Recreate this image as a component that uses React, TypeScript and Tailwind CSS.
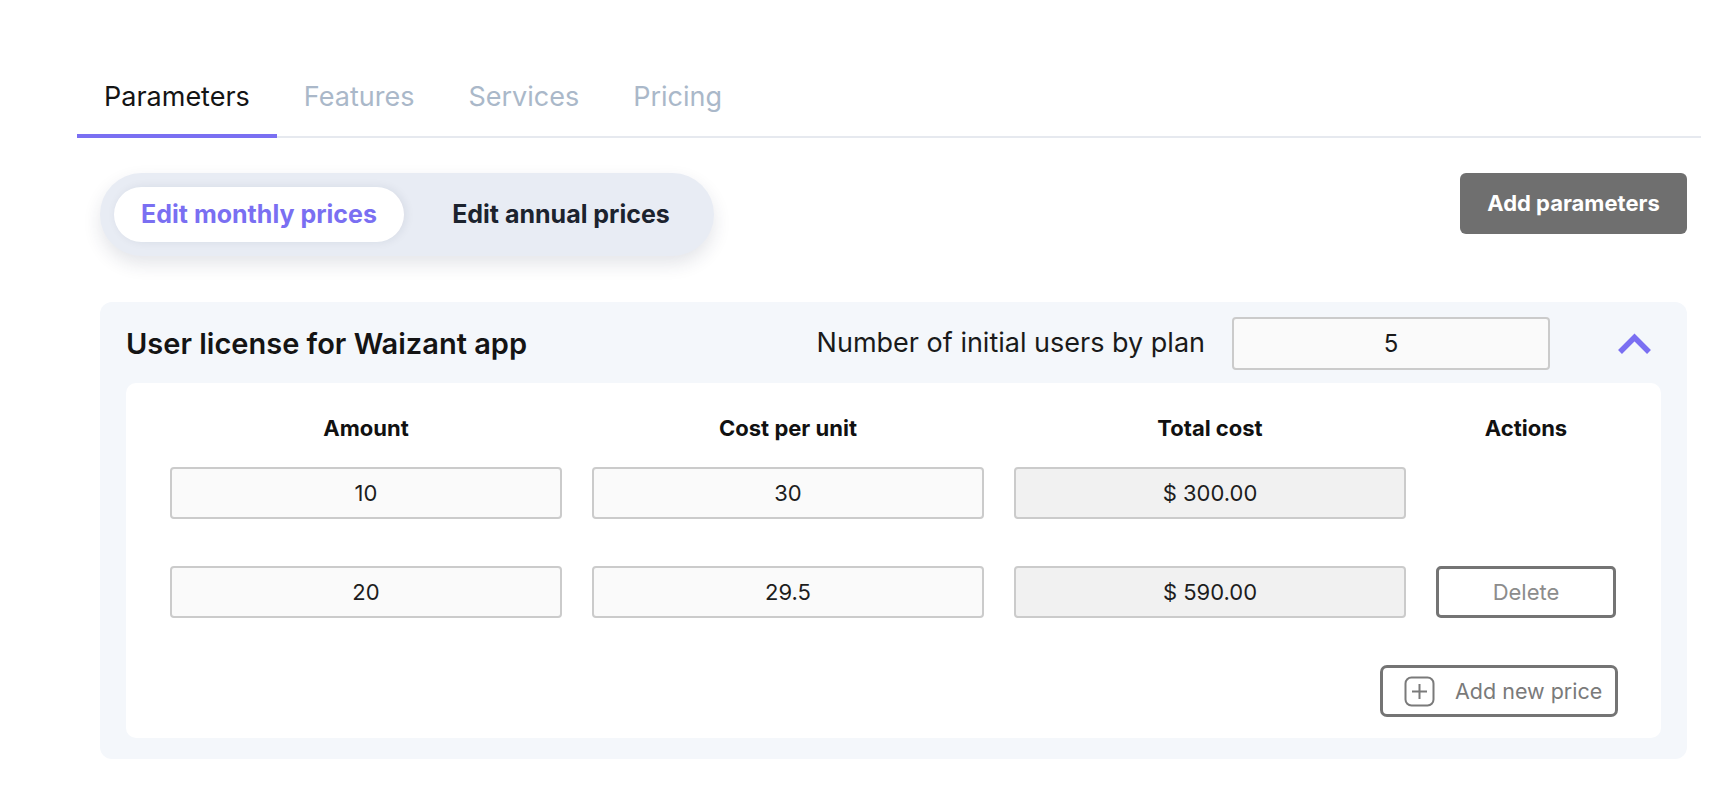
const tabs = ["Parameters", "Features", "Services", "Pricing"];

const rows = [
  { amount: "10", cost: "30", total: "$ 300.00", removable: false },
  { amount: "20", cost: "29.5", total: "$ 590.00", removable: true },
];

function Field({ value, readOnly }: { value: string; readOnly?: boolean }) {
  return (
    <div
      className={
        "flex h-[52px] items-center justify-center rounded-[4px] border-2 border-[#cbcbcb] text-[22px] text-[#1d1d1d] " +
        (readOnly ? "bg-[#f1f1f1]" : "bg-[#fafafa]")
      }
    >
      {value}
    </div>
  );
}

export default function App() {
  return (
    <div className="h-[798px] w-full overflow-hidden bg-white font-['Inter',sans-serif]">
      {/* Tabs */}
      <div className="pt-[82px]">
        <div className="ml-[77px] flex w-[1624px] border-b-2 border-[#e6e9ef]">
          {tabs.map((tab, i) => (
            <button
              key={tab}
              type="button"
              className={
                "-mb-[2px] border-b-4 px-[27px] pb-[22px] text-[27px] leading-[30px] " +
                (i === 0 ? "border-[#7a6ff2] text-[#141414]" : "border-transparent text-[#aab8c9]")
              }
            >
              {tab}
            </button>
          ))}
        </div>
      </div>

      <div className="ml-[100px] w-[1587px]">
        {/* Toggle + add */}
        <div className="mt-[35px] flex items-start justify-between">
          <div className="flex h-[83px] w-[614px] items-center rounded-full bg-[#e8ecf4] p-[14px] shadow-[0_8px_18px_rgba(30,40,70,0.12)]">
            <button
              type="button"
              className="h-[55px] w-[290px] rounded-full bg-white text-[25px] font-bold text-[#7a6ff2] shadow-[2px_0_10px_rgba(30,40,70,0.08)]"
            >
              Edit monthly prices
            </button>
            <button type="button" className="h-[55px] flex-1 pl-[18px] text-[25px] font-bold text-[#1c232e]">
              Edit annual prices
            </button>
          </div>
          <button
            type="button"
            className="h-[61px] w-[227px] rounded-[6px] bg-[#6f6f6f] text-[22px] font-bold text-white"
          >
            Add parameters
          </button>
        </div>

        {/* Parameter panel */}
        <div className="mt-[46px] rounded-[12px] bg-[#f4f7fb] px-[26px] pb-[21px] pt-[15px]">
          <div className="flex h-[53px] items-center">
            <h2 className="flex-1 text-[29px] font-semibold text-[#141414]">User license for Waizant app</h2>
            <span className="text-[27px] text-[#1a1a1a]">Number of initial users by plan</span>
            <div className="ml-[27px] flex h-[53px] w-[318px] items-center justify-center rounded-[4px] border-2 border-[#cbcbcb] bg-[#fafafa] text-[24px] text-[#1a1a1a]">
              5
            </div>
            <button type="button" className="ml-[67px] mr-[9px] flex h-[53px] w-[35px] items-center justify-center">
              <svg width="35" height="22" viewBox="0 0 35 22" fill="none">
                <path d="M3 19 L17.5 4.5 L32 19" stroke="#7a6ff2" strokeWidth="5.5" strokeLinejoin="miter" />
              </svg>
            </button>
          </div>

          <div className="mt-[13px] rounded-[10px] bg-white pb-[21px] pl-[44px] pr-[45px] pt-[30px]">
            <div className="grid grid-cols-[392px_392px_392px_180px] gap-x-[30px]">
              {["Amount", "Cost per unit", "Total cost", "Actions"].map((h) => (
                <div key={h} className="text-center text-[22px] font-bold leading-[30px] text-[#111]">
                  {h}
                </div>
              ))}
            </div>

            <div className="mt-[24px] flex flex-col gap-[47px]">
              {rows.map((r) => (
                <div key={r.amount} className="grid grid-cols-[392px_392px_392px_180px] gap-x-[30px]">
                  <Field value={r.amount} />
                  <Field value={r.cost} />
                  <Field value={r.total} readOnly />
                  {r.removable ? (
                    <button
                      type="button"
                      className="h-[52px] rounded-[5px] border-[3px] border-[#747474] bg-white text-[22px] text-[#8c8c8c]"
                    >
                      Delete
                    </button>
                  ) : (
                    <div />
                  )}
                </div>
              ))}

              <div className="flex justify-end">
                <button
                  type="button"
                  className="mr-[-2px] flex h-[52px] w-[238px] items-center gap-[20px] rounded-[7px] border-[3px] border-[#747474] bg-white pl-[21px] text-[21.5px] text-[#7a7a7a]"
                >
                  <svg width="31" height="31" viewBox="0 0 31 31" fill="none" stroke="#7a7a7a" strokeWidth="2">
                    <rect x="1.5" y="1.5" width="28" height="28" rx="6" />
                    <path d="M15.5 8v15M8 15.5h15" />
                  </svg>
                  Add new price
                </button>
              </div>
            </div>
          </div>
        </div>
      </div>
    </div>
  );
}
